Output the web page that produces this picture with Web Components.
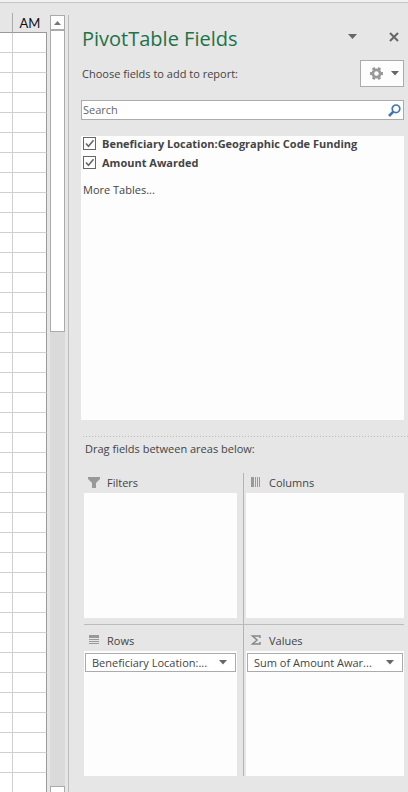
<!DOCTYPE html>
<html lang="en">
<head>
<meta charset="utf-8">
<title>PivotTable Fields</title>
<style>
  html, body { height: 100%; }
  body {
    margin: 0;
    background: #e6e6e6;
    color: #444;
    font: 11px/16px "Open Sans", "Noto Sans", sans-serif;
    overflow: hidden;
  }
</style>
</head>
<body>

<template id="app-window">
  <style>
    :host { display: flex; box-sizing: border-box; height: calc(100vh - 2px); margin-top: 2px; border-top: 1px solid #c6c6c6; box-shadow: 0 -2px #f1f1f1; }
    pivot-pane { flex: 1; min-width: 0; }
  </style>
  <sheet-grid></sheet-grid>
  <sheet-scrollbar></sheet-scrollbar>
  <pivot-pane></pivot-pane>
</template>

<template id="sheet-grid">
  <style>
    :host { display: block; width: 47px; overflow: hidden; }
    table { width: 100%; table-layout: fixed; border-collapse: separate; border-spacing: 0; margin-top: 10px; }
    th, td { box-sizing: border-box; padding: 0; }
    th { height: 20px; border-bottom: 1px solid #999; font: 13px/18px Lato, "Open Sans", sans-serif; color: #111; }
    td { height: 20px; background: #fff; border-bottom: 1px solid #d0d0d0; }
    .edge { width: 13px; border-right: 1px solid #d0d0d0; }
    th.edge { border-right-color: #ababab; }
    td:last-child { border-right: 1px solid #999; }
  </style>
  <table aria-label="Worksheet">
    <thead><tr><th class="edge"></th><th scope="col">AM</th></tr></thead>
    <tbody></tbody>
  </table>
</template>

<template id="sheet-scrollbar">
  <style>
    :host { display: flex; flex-direction: column; box-sizing: border-box; width: 15px; margin: 12px 3px 0; background: #dadada; }
    button { box-sizing: border-box; width: 15px; height: 15px; flex: none; padding: 0; border: 1px solid #ababab; background: #fff; display: flex; align-items: center; justify-content: center; }
    .thumb { box-sizing: border-box; height: 302px; border: 1px solid #ababab; background: #fff; }
    .down { margin: auto 0 -9px; }
  </style>
  <button type="button" aria-label="Scroll up"><svg width="7" height="4"><path d="M0 4 3.5 0 7 4z" fill="#777"/></svg></button>
  <div class="thumb"></div>
  <button type="button" class="down" aria-label="Scroll down"></button>
</template>

<template id="drop-arrow">
  <style>
    :host { display: inline-flex; width: 9px; }
    :host([small]) { width: 8px; }
    svg { width: 100%; height: auto; fill: #666; }
  </style>
  <svg viewBox="0 0 9 5"><path d="M0 0h9L4.500 5z"/></svg>
</template>

<template id="pivot-pane">
  <style>
    :host { display: flex; flex-direction: column; box-sizing: border-box; margin-top: 12px; padding: 8px 4px 16px 12px; border-left: 1px solid #bcbcbc; }
    button { box-sizing: border-box; padding: 0; border: 0; background: none; display: flex; align-items: center; justify-content: center; }
    header { display: flex; align-items: center; height: 32px; }
    h1 { flex: 1; margin: 0; padding-left: 1px; font-size: 20px; line-height: 32px; font-weight: 400; color: #217346; white-space: nowrap; }
    .menu { width: 16px; height: 16px; margin-right: 24px; padding-bottom: 5px; }
    .close { width: 20px; height: 16px; padding-bottom: 5px; }
    .choose { display: flex; align-items: center; justify-content: space-between; margin-top: 5px; }
    p { margin: 0; padding-left: 1px; }
    .tools { width: 44px; height: 27px; gap: 8px; padding-left: 4px; border: 1px solid #ababab; background: #fdfdfd; }
    .search { display: flex; align-items: center; box-sizing: border-box; height: 20px; margin-top: 13px; padding: 0 2px 0 1px; border: 1px solid #ababab; background: #fff; }
    input { flex: 1; min-width: 0; padding: 0; border: 0; outline: 0; background: none; font: inherit; color: #666; }
    input::placeholder { color: #666; opacity: 1; }
    .fields { flex: 1; box-sizing: border-box; margin-top: 16px; background: #fdfdfd; overflow: hidden; }
    .more { display: inline-block; margin: 8px 0 0 2px; color: inherit; text-decoration: none; }
    .split { height: 1px; margin: 16px -4px 0 2px; background: repeating-linear-gradient(90deg, #bcbcbc 0 1px, transparent 1px 3px); }
    .drag { padding: 4px 0 0 4px; }
    .areas { display: grid; grid-template-columns: 1fr 1fr; margin: 16px 0 0 3px; }
    .areas > :nth-child(odd) { border-right: 1px solid #b4b4b4; padding-right: 6px; }
    .areas > :nth-child(even) { padding-left: 2px; }
    .areas > :nth-child(-n+2) { border-bottom: 1px solid #bcbcbc; padding-bottom: 6px; }
    .areas > :nth-child(n+3) { padding-top: 6px; }
  </style>
  <header>
    <h1>PivotTable Fields</h1>
    <button type="button" class="menu" aria-label="Pane options"><drop-arrow></drop-arrow></button>
    <button type="button" class="close" aria-label="Close"><svg width="10" height="10" viewBox="0 0 10 10"><path d="M1 1l8 8M9 1 1 9" stroke="#666" stroke-width="2"/></svg></button>
  </header>
  <div class="choose">
    <p>Choose fields to add to report:</p>
    <button type="button" class="tools" aria-label="Tools">
      <svg width="13" height="13" viewBox="0 0 13 13" fill="none" stroke="#999"><circle cx="6.500" cy="6.500" r="3.700" stroke-width="2.800"/><path d="M0 6.500h2.500M10.500 6.500H13M3.200 .7l1.300 2.400M8.500 9.900l1.300 2.400M9.800 .7 8.500 3.100M4.500 9.900l-1.300 2.400" stroke-width="3"/></svg>
      <drop-arrow small></drop-arrow>
    </button>
  </div>
  <div class="search">
    <input type="text" placeholder="Search" aria-label="Search">
    <svg width="13" height="13" viewBox="0 0 13 13" fill="none" stroke="#3f78b5"><circle cx="8" cy="4.800" r="3.800" stroke-width="1.700"/><path d="M5.300 7.700 1 12" stroke-width="2.600"/></svg>
  </div>
  <div class="fields">
    <field-check>Beneficiary Location:Geographic Code Funding</field-check>
    <field-check>Amount Awarded</field-check>
    <a class="more" href="#">More Tables...</a>
  </div>
  <div class="split"></div>
  <p class="drag">Drag fields between areas below:</p>
  <div class="areas">
    <drop-area>
      <svg slot="icon" width="12" height="12" fill="#999"><path d="M0 0h12v2L8 6v5H4V6L0 2z"/></svg>
      Filters
    </drop-area>
    <drop-area>
      <svg slot="icon" width="12" height="12" fill="#999"><path d="M1 0h3v10H1zM5 0h1v10H5zM7 0h1v10H7zM9 0h1v10H9z"/></svg>
      Columns
    </drop-area>
    <drop-area>
      <svg slot="icon" width="12" height="12" fill="#999"><path d="M1 0h10v3H1zM1 4h10v1H1zM1 6h10v1H1zM1 8h10v1H1z"/></svg>
      Rows
    </drop-area>
    <drop-area>
      <svg slot="icon" width="12" height="12" fill="none" stroke="#888" stroke-width="1.500"><path d="M10 3V1H2.500L7 5 2.500 9H10V7"/></svg>
      Values
    </drop-area>
  </div>
</template>

<template id="field-check">
  <style>
    :host { display: block; height: 19px; padding-left: 2px; }
    label { display: flex; align-items: center; gap: 6px; height: 15px; font-weight: 700; white-space: nowrap; }
    input { appearance: none; box-sizing: border-box; width: 13px; height: 13px; flex: none; margin: 0; border: 1px solid #666; background: #fff; }
    .box { display: grid; }
    .box > * { grid-area: 1 / 1; }
    svg { pointer-events: none; }
    input:not(:checked) + svg { display: none; }
  </style>
  <label>
    <span class="box">
      <input type="checkbox" checked>
      <svg width="13" height="13" fill="none" stroke="#666" stroke-width="1.600"><path d="M3 6.500 5.500 9.200 10.500 3.300"/></svg>
    </span>
    <slot></slot>
  </label>
</template>

<template id="drop-area">
  <style>
    :host { display: block; box-sizing: border-box; min-width: 0; }
    h2 { display: flex; align-items: center; gap: 7px; height: 16px; margin: 0; padding: 2px 0 2px 4px; font-size: 11px; line-height: 16px; font-weight: 400; }
    .drop { box-sizing: border-box; height: 125px; padding: 2px 1px; background: #fdfdfd; }
    .label { white-space: nowrap; }
  </style>
  <h2><slot name="icon"></slot><span class="label"><slot></slot></span></h2>
  <div class="drop"><slot name="items"></slot></div>
</template>

<template id="field-chip">
  <style>
    :host { display: block; }
    button { display: flex; align-items: center; justify-content: space-between; box-sizing: border-box; width: 100%; height: 19px; padding: 0 8px 0 6px; border: 1px solid #ababab; background: #fff; color: inherit; font: inherit; white-space: nowrap; }
  </style>
  <button type="button"><span><slot></slot></span><drop-arrow small></drop-arrow></button>
</template>

<script>
  // every element here renders the template that carries its own tag name
  class TemplateElement extends HTMLElement {
    constructor() {
      super();
      const template = document.getElementById(this.localName);
      this.attachShadow({ mode: 'open' })
        .appendChild(document.importNode(template.content, true));
    }
  }

  class SheetGrid extends TemplateElement {
    constructor() {
      super();
      const body = this.shadowRoot.querySelector('tbody');
      for (let i = 0; i < 38; i++) {
        const row = body.insertRow();
        row.insertCell().className = 'edge';
        row.insertCell();
      }
    }
  }

  class PivotPane extends TemplateElement {
    constructor() {
      super();
      const areas = this.shadowRoot.querySelectorAll('drop-area');
      this.addItem(areas[2], 'Beneficiary Location:...');
      this.addItem(areas[3], 'Sum of Amount Awar...');
    }

    addItem(area, text) {
      const chip = document.createElement('field-chip');
      chip.slot = 'items';
      chip.textContent = text;
      area.appendChild(chip);
    }
  }

  customElements.define('drop-arrow', class extends TemplateElement {});
  customElements.define('field-chip', class extends TemplateElement {});
  customElements.define('field-check', class extends TemplateElement {});
  customElements.define('drop-area', class extends TemplateElement {});
  customElements.define('sheet-grid', SheetGrid);
  customElements.define('sheet-scrollbar', class extends TemplateElement {});
  customElements.define('pivot-pane', PivotPane);
  customElements.define('app-window', class extends TemplateElement {});
</script>

<app-window></app-window>

</body>
</html>
